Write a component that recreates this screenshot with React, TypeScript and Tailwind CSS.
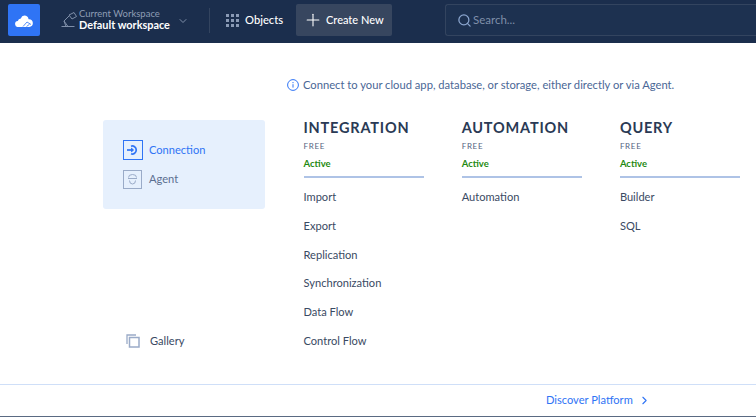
import { ChevronDown, ChevronRight, Plus, Search } from "lucide-react";

const columns = [
  { title: "INTEGRATION", items: ["Import", "Export", "Replication", "Synchronization", "Data Flow", "Control Flow"] },
  { title: "AUTOMATION", items: ["Automation"] },
  { title: "QUERY", items: ["Builder", "SQL"] },
];

function CloudLogo() {
  return (
    <svg width="18" height="12" viewBox="0 0 18 12" className="mt-[1px]">
      <path d="M3.4 12a3 3 0 0 1-.6-6 3.4 3.4 0 0 1 3-2.6A4.2 4.2 0 0 1 9.4 0.6a4.4 4.4 0 0 1 4.2 3.6 3.9 3.9 0 0 1 .6 7.8z" fill="#fff" />
      <path d="M8 11.5l4-4.5 4 2.5M11.5 11.5l3-2.2" stroke="#2f74f5" strokeWidth="0.8" fill="none" />
    </svg>
  );
}

function LampIcon() {
  return (
    <svg width="18" height="18" viewBox="0 0 18 18" fill="none" stroke="#7f8fa9" strokeWidth="1">
      <path d="M0.5 15.5h13" />
      <path d="M5 15.5l-2-5.5 5-5" />
      <path d="M8 4l5-2.5 2.5 4-4.5 2.5z" />
      <path d="M3 10l4 5.5" />
    </svg>
  );
}

function GridIcon() {
  return (
    <div className="grid grid-cols-3 gap-[2px]">
      {Array.from({ length: 9 }).map((_, i) => (
        <span key={i} className="w-[3px] h-[3px] bg-[#8a9ab5]" />
      ))}
    </div>
  );
}

export default function App() {
  return (
    <div className="w-[756px] h-[417px] flex flex-col bg-white overflow-hidden font-['Lato',sans-serif]">
      <header className="h-[43px] shrink-0 bg-[#1b2e4d] flex items-start pt-[4px] pl-[8px]">
        <div className="w-[32px] h-[32px] rounded-[2px] bg-[#2f74f5] flex items-center justify-center">
          <CloudLogo />
        </div>
        <div className="ml-[21px] w-[18px] h-[32px] flex items-center">
          <LampIcon />
        </div>
        <div className="h-[32px] w-[92px] flex flex-col justify-center">
          <span className="text-[9.5px] leading-[10px] text-[#8e9db5]">Current Workspace</span>
          <span className="text-[10.9px] leading-[12px] font-bold text-white whitespace-nowrap">Default workspace</span>
        </div>
        <ChevronDown size={12} className="ml-[6px] mt-[11px] text-[#7f8fa9]" />
        <div className="ml-[20px] mt-[4px] w-px h-[25px] bg-[#33445f]" />
        <div className="ml-[16px] h-[32px] flex items-center gap-[6px]">
          <GridIcon />
          <span className="w-[38px] text-[11.2px] font-medium text-white">Objects</span>
        </div>
        <button className="ml-[13px] w-[96px] h-[32px] rounded-[2px] bg-[#37465f] flex items-center pl-[7px] gap-[3px] text-[11px] font-medium text-white">
          <Plus size={20} strokeWidth={1.3} />
          Create New
        </button>
        <div className="ml-[53px] flex-1 h-[32px] rounded-l-[3px] border border-r-0 border-[#33445f] bg-[#1d3150] flex items-center pl-[11px] gap-[1px]">
          <Search size={15} className="text-[#8ba6cf]" />
          <span className="text-[11.5px] text-[#7f8fa9]">Search...</span>
        </div>
      </header>

      <main className="flex-1 pl-[103px]">
        <div className="pl-[184px] pt-[34px] h-[77px] flex items-start gap-[4px] text-[11.2px] leading-[16px] text-[#4a6796]">
          <svg width="12" height="12" viewBox="0 0 12 12" className="mt-[2px]" fill="none" stroke="#2f74f5">
            <circle cx="6" cy="6" r="5.4" />
            <path d="M6 5.2v3.4M6 3v1.2" />
          </svg>
          Connect to your cloud app, database, or storage, either directly or via Agent.
        </div>
        <div className="flex">
          <div className="w-[162px] h-[231px] flex flex-col">
            <div className="h-[89px] rounded-[3px] bg-[#e6f0fd] pl-[20px] pt-[20px]">
              <div className="flex items-center gap-[6px] h-[20px] text-[11.1px] text-[#2f74f5]">
                <span className="w-[20px] h-[20px] border-[1.5px] border-[#2f74f5] flex items-center justify-center">
                  <svg width="12" height="10" viewBox="0 0 12 10" fill="none" stroke="#2f74f5" strokeWidth="1.7">
                    <path d="M0 5h5.5" />
                    <path d="M4.5 3.2l2 1.8-2 1.8z" fill="#2f74f5" strokeWidth="1" />
                    <path d="M4 1.2a4 4 0 1 1 0 7.6" />
                  </svg>
                </span>
                Connection
              </div>
              <div className="mt-[10px] flex items-center gap-[7px] h-[19px] text-[11.1px] text-[#5b6f91]">
                <span className="w-[19px] h-[19px] border border-[#9aabc8] flex items-center justify-center">
                  <svg width="11" height="11" viewBox="0 0 11 11" fill="none" stroke="#9aabc8">
                    <path d="M1.5 3.5a4 3 0 0 1 8 0" />
                    <path d="M1 4.5h9" />
                    <path d="M2.5 6.5a3 3.5 0 0 0 6 0" />
                  </svg>
                </span>
                Agent
              </div>
            </div>
            <div className="mt-auto pl-[23px] flex items-center gap-[10px] h-[20px] text-[11.1px] text-[#3a4a63]">
              <svg width="14" height="14" viewBox="0 0 14 14" fill="none" stroke="#9aabc8" strokeWidth="1.3">
                <path d="M1 10V1h9" />
                <rect x="3.5" y="3.5" width="9.5" height="9.5" strokeWidth="1.5" />
              </svg>
              Gallery
            </div>
          </div>
          <div className="ml-[38.5px] flex gap-[38.2px]">
            {columns.map((col) => (
              <section key={col.title} className="w-[120px]">
                <h2 className="h-[16px] text-[14.5px] leading-[16px] font-bold tracking-[0.8px] text-[#2a3a55] whitespace-nowrap">{col.title}</h2>
                <p className="mt-[4px] text-[8px] leading-[12px] tracking-[0.7px] text-[#54647f]">FREE</p>
                <p className="mt-[6px] text-[9.5px] leading-[12px] font-bold text-[#1f8a12]">Active</p>
                <div className="mt-[6px] h-[2px] bg-[#aec3e6]" />
                <ul className="mt-[9px]">
                  {col.items.map((item) => (
                    <li key={item} className="h-[28.8px] text-[11.1px] leading-[20px] text-[#3a4a63]">
                      {item}
                    </li>
                  ))}
                </ul>
              </section>
            ))}
          </div>
        </div>
      </main>

      <footer className="h-[32px] shrink-0 border-t border-[#cfdff8] flex items-center pl-[546px] gap-[5px] text-[11.1px] text-[#2f74f5]">
        Discover Platform
        <ChevronRight size={13} />
      </footer>
      <div className="h-px shrink-0 bg-[#5a6a82]" />
    </div>
  );
}
